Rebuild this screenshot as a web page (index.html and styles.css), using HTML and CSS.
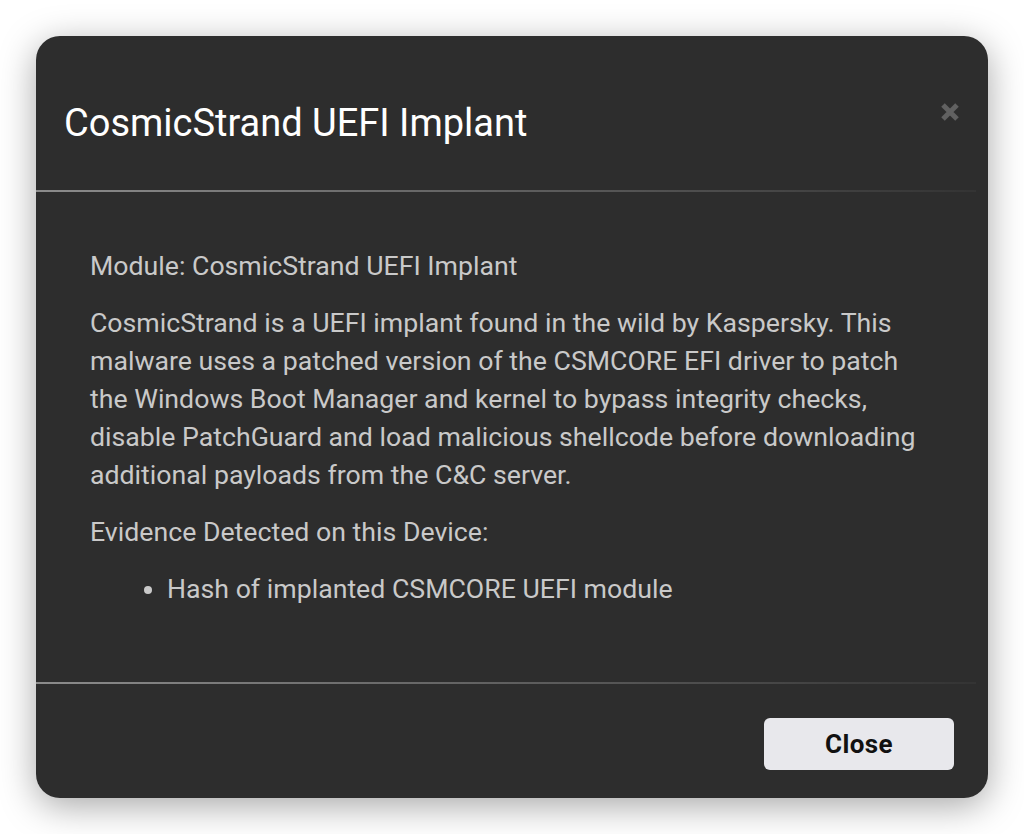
FILE: index.html
```html
<!DOCTYPE html>
<html lang="en">
<head>
    <meta charset="UTF-8">
    <meta name="viewport" content="width=device-width, initial-scale=1.0">
    <title>CosmicStrand UEFI Implant</title>
    <link rel="stylesheet" href="styles.css">
</head>
<body>
    <div class="modal">
        <div class="modal-header">
            <h2 class="modal-title">CosmicStrand UEFI Implant</h2>
            <button class="modal-x" aria-label="Close">
                <svg width="20" height="20" viewBox="0 0 20 20">
                    <path d="M3 3 L17 17 M17 3 L3 17" stroke="#616161" stroke-width="5" stroke-linecap="butt"/>
                </svg>
            </button>
        </div>
        <div class="divider"></div>
        <div class="modal-body">
            <p>Module: CosmicStrand UEFI Implant</p>
            <p>CosmicStrand is a UEFI implant found in the wild by Kaspersky. This malware uses a patched version of the CSMCORE EFI driver to patch the Windows Boot Manager and kernel to bypass integrity checks, disable PatchGuard and load malicious shellcode before downloading additional payloads from the C&amp;C server.</p>
            <p>Evidence Detected on this Device:</p>
            <ul>
                <li>Hash of implanted CSMCORE UEFI module</li>
            </ul>
        </div>
        <div class="divider"></div>
        <div class="modal-footer">
            <button class="btn-close">Close</button>
        </div>
    </div>
</body>
</html>
```

FILE: styles.css
```css
* {
    box-sizing: border-box;
}

body {
    margin: 0;
    padding: 36px;
    background: #fff;
    font-family: Roboto, "Liberation Sans", sans-serif;
}

.modal {
    width: 952px;
    height: 762px;
    background: #2d2d2d;
    border-radius: 24px;
    box-shadow: 0 8px 36px rgba(0, 0, 0, 0.35);
    display: flex;
    flex-direction: column;
    overflow: hidden;
}

.modal-header {
    height: 154px;
    padding: 65px 28px 0;
    display: flex;
    align-items: flex-start;
    justify-content: space-between;
}

.modal-title {
    margin: 0;
    font-size: 38px;
    line-height: 44px;
    font-weight: 400;
    color: #fff;
}

.modal-x {
    background: none;
    border: none;
    padding: 0;
    margin-top: 1px;
    width: 20px;
    height: 20px;
    cursor: pointer;
}

.divider {
    height: 2px;
    width: calc(100% - 12px);
    background: linear-gradient(to right, rgba(255, 255, 255, 0.45), rgba(255, 255, 255, 0.03));
}

.modal-body {
    flex: 1;
    padding: 55px 54px 0;
    color: #c9c9c9;
    font-size: 26.7px;
    line-height: 38px;
}

.modal-body p {
    margin: 0 0 19px;
}

.modal-body ul {
    margin: 0;
    padding-left: 77px;
}

.modal-footer {
    height: 114px;
    padding: 34px 34px 0;
    display: flex;
    justify-content: flex-end;
    align-items: flex-start;
}

.btn-close {
    width: 190px;
    height: 52px;
    background: #e8e8ec;
    border: none;
    border-radius: 6px;
    font-family: Roboto, "Liberation Sans", sans-serif;
    font-size: 26px;
    letter-spacing: 0.4px;
    font-weight: 700;
    color: #111;
    cursor: pointer;
}
```
